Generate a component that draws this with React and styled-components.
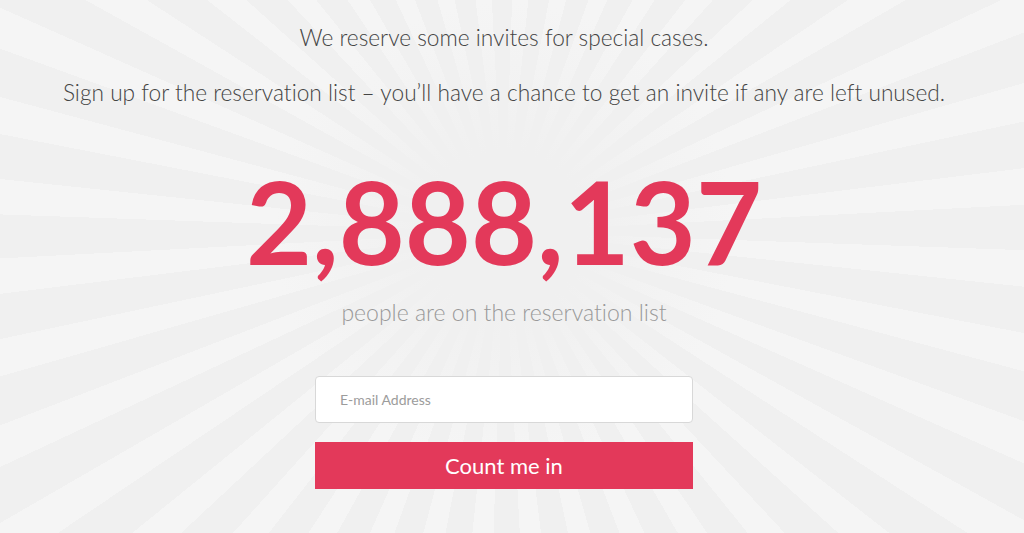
import styled, { createGlobalStyle } from 'styled-components';

const GlobalStyle = createGlobalStyle`
  html, body {
    margin: 0;
    padding: 0;
    height: 100%;
  }
  body {
    font-family: Lato, "Open Sans", sans-serif;
    font-variant-ligatures: none;
    background: #f1f1f1;
    overflow: hidden;
  }
`;

const Page = styled.div`
  width: 1024px;
  height: 533px;
  box-sizing: border-box;
  padding: 22px 16px 0 0;
  background:
    radial-gradient(circle at 504px 232px, #f0f0f0 0, #f0f0f0 80px, rgba(240, 240, 240, 0) 230px),
    repeating-conic-gradient(from 2deg at 504px 232px, #f5f5f5 0deg 4deg, #f0f0f0 4deg 9deg);
  display: flex;
  flex-direction: column;
  align-items: center;
  color: #444;
`;

const Lead = styled.p`
  margin: 0 0 ${(p) => p.$gap || 0}px;
  font-size: 22.7px;
  font-weight: 300;
  line-height: 32px;
  text-align: center;
`;

const Count = styled.div`
  margin-top: 49px;
  font-size: 114px;
  font-weight: 700;
  line-height: 126px;
  color: #e3395a;
`;

const Caption = styled.div`
  margin-top: 12px;
  font-size: 23px;
  font-weight: 300;
  line-height: 32px;
  color: #999;
`;

const Form = styled.form`
  margin-top: 48px;
  width: 378px;
  display: flex;
  flex-direction: column;
  gap: 19px;
`;

const EmailInput = styled.input`
  box-sizing: border-box;
  height: 47px;
  width: 100%;
  padding: 0 24px;
  border: 1px solid #d8d8d8;
  border-radius: 4px;
  background: #fff;
  font-family: Lato, sans-serif;
  font-size: 14px;
  font-weight: 400;
  color: #444;
  outline: none;
  &::placeholder {
    color: #9c9c9c;
  }
`;

const SubmitButton = styled.button`
  height: 47px;
  width: 100%;
  border: none;
  border-radius: 0;
  background: #e3395a;
  color: #fff;
  font-family: Lato, sans-serif;
  font-size: 22px;
  font-weight: 400;
  cursor: pointer;
`;

export default function App() {
  return (
    <>
      <GlobalStyle />
      <Page>
        <Lead $gap={23}>We reserve some invites for special cases.</Lead>
        <Lead>Sign up for the reservation list – you’ll have a chance to get an invite if any are left unused.</Lead>
        <Count>2,888,137</Count>
        <Caption>people are on the reservation list</Caption>
        <Form onSubmit={(e) => e.preventDefault()}>
          <EmailInput type="email" placeholder="E-mail Address" />
          <SubmitButton type="submit">Count me in</SubmitButton>
        </Form>
      </Page>
    </>
  );
}
